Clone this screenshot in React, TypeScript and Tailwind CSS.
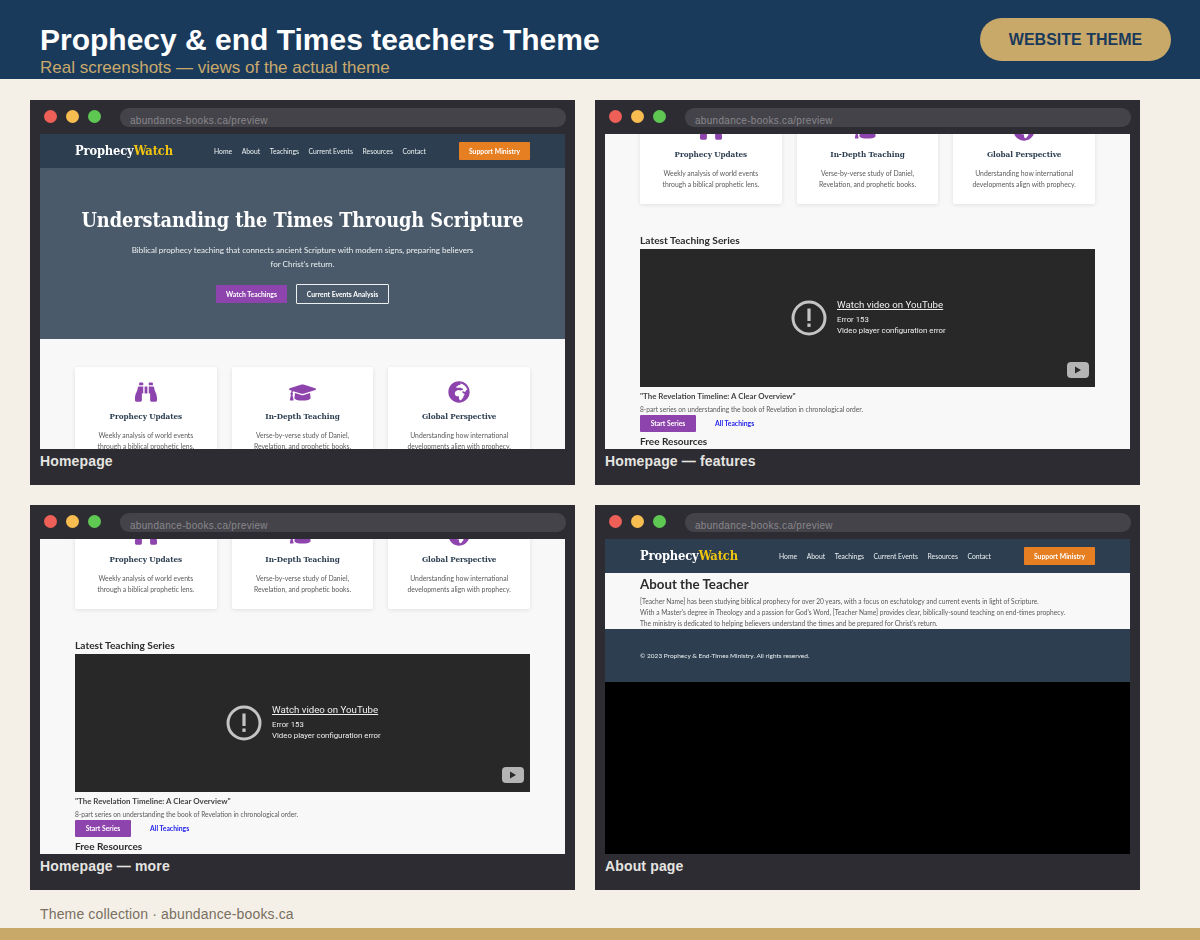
import { FaBinoculars, FaGlobeAfrica, FaGraduationCap } from "react-icons/fa"

const slab = "font-['DejaVu_Serif_Condensed','Liberation_Serif',serif]"
const body = "font-['Lato',sans-serif]"

const features = [
  {
    icon: FaBinoculars,
    size: "h-[22px] w-[22px]",
    title: "Prophecy Updates",
    lines: ["Weekly analysis of world events", "through a biblical prophetic lens."],
  },
  {
    icon: FaGraduationCap,
    size: "h-[27px] w-[27px]",
    title: "In-Depth Teaching",
    lines: ["Verse-by-verse study of Daniel,", "Revelation, and prophetic books."],
  },
  {
    icon: FaGlobeAfrica,
    size: "h-[22px] w-[22px]",
    title: "Global Perspective",
    lines: ["Understanding how international", "developments align with prophecy."],
  },
]

const navLinks = ["Home", "About", "Teachings", "Current Events", "Resources", "Contact"]

function SiteNav() {
  return (
    <div className="flex h-[34px] items-center justify-between bg-[#2c3e50] px-[35px]">
      <div className={`${slab} mt-[1px] w-[139px] text-[12.8px] font-bold leading-none tracking-[-0.15px] text-white`}>
        Prophecy<span className="text-[#f1c40f]">Watch</span>
      </div>
      <div className="flex flex-1 gap-[9.6px] text-[6.8px] text-[#ecf0f1]">
        {navLinks.map((link) => (
          <span key={link}>{link}</span>
        ))}
      </div>
      <div className="flex h-[18px] w-[71px] items-center justify-center rounded-[1px] bg-[#e67e22] text-[6.8px] font-bold text-white">
        Support Ministry
      </div>
    </div>
  )
}

function Hero() {
  return (
    <div className="flex h-[171px] flex-col items-center bg-[#4a5a6a] pt-[38px] text-white">
      <h1 className={`${slab} whitespace-nowrap text-[19.7px] font-bold leading-[30px] tracking-[-0.05px]`}>
        Understanding the Times Through Scripture
      </h1>
      <p className="mt-[8px] text-center text-[8.05px] leading-[13.5px] text-[#ecf0f1]">
        Biblical prophecy teaching that connects ancient Scripture with modern signs, preparing believers
        <br />
        for Christ's return.
      </p>
      <div className="mt-[13px] flex items-center gap-[9px] text-[6.8px] font-bold">
        <div className="flex h-[18px] w-[71px] items-center justify-center rounded-[1px] bg-[#8e44ad]">
          Watch Teachings
        </div>
        <div className="flex h-[20px] w-[93px] items-center justify-center rounded-[1px] border border-[#ecf0f1]">
          Current Events Analysis
        </div>
      </div>
    </div>
  )
}

function Features() {
  return (
    <div className="grid grid-cols-3 gap-[15px]">
      {features.map((feature) => {
        const Icon = feature.icon
        return (
          <div
            key={feature.title}
            className="flex h-[99px] flex-col items-center rounded-[2px] bg-white pt-[14px] shadow-[0_1px_4px_rgba(0,0,0,0.1)]"
          >
            <div className="flex h-[22px] items-center">
              <Icon className={`${feature.size} text-[#8e44ad]`} />
            </div>
            <div className={`${slab} mt-[7px] text-[8.1px] font-bold leading-[12px] tracking-[-0.08px] text-[#2c3e50]`}>
              {feature.title}
            </div>
            <div className="mt-[8px] text-center text-[6.8px] leading-[11px] text-[#5a5a5a]">
              {feature.lines.map((line) => (
                <div key={line}>{line}</div>
              ))}
            </div>
          </div>
        )
      })}
    </div>
  )
}

function VideoError() {
  return (
    <div className="relative flex h-[138px] items-center justify-center bg-[#282828] pl-[3px] text-[#eeeeee]">
      <svg width="36" height="36" viewBox="0 0 36 36" className="mr-[10px]">
        <circle cx="18" cy="18" r="16" fill="none" stroke="#c4c4c4" strokeWidth="3" />
        <rect x="16.4" y="8.5" width="3.2" height="12.5" fill="#c4c4c4" />
        <rect x="16.4" y="23.5" width="3.2" height="3.4" fill="#c4c4c4" />
      </svg>
      <div className="mt-[-3px] w-[110px] whitespace-nowrap font-['Roboto',sans-serif]">
        <div className="text-[9.7px] leading-[13px] underline">Watch video on YouTube</div>
        <div className="mt-[3px] text-[7.8px] leading-[11px]">Error 153</div>
        <div className="text-[7.8px] leading-[11px]">Video player configuration error</div>
      </div>
      <div className="absolute bottom-[9px] right-[6px] flex h-[16px] w-[22px] items-center justify-center rounded-[4px] bg-[#b4b4b4]">
        <svg width="8" height="8" viewBox="0 0 8 8">
          <path d="M1 0.5 L7 4 L1 7.5 Z" fill="#2a2a2a" />
        </svg>
      </div>
    </div>
  )
}

function HomePage({ scroll }: { scroll: boolean }) {
  return (
    <div className={`${body} ${scroll ? "mt-[-262px]" : ""} blur-[0.25px]`}>
      <SiteNav />
      <Hero />
      <div className="bg-[#f8f8f8] px-[35px] pb-[20px] pt-[28px]">
        <Features />
        <h2 className="mt-[30px] text-[10.2px] font-bold leading-[13px] text-[#2c2c2c]">
          Latest Teaching Series
        </h2>
        <div className="mt-[2px]">
          <VideoError />
        </div>
        <div className="mt-[4px] text-[7.9px] font-bold leading-[10px] text-[#444444]">
          "The Revelation Timeline: A Clear Overview"
        </div>
        <div className="mt-[4px] text-[6.65px] leading-[9px] text-[#5a5a5a]">
          8-part series on understanding the book of Revelation in chronological order.
        </div>
        <div className="mt-[1px] flex items-center gap-[19px] text-[6.8px] font-bold">
          <div className="flex h-[17px] w-[56px] items-center justify-center rounded-[1px] bg-[#8e44ad] text-white">
            Start Series
          </div>
          <div className="text-[#2222ee]">All Teachings</div>
        </div>
        <div className="mt-[3px] text-[10px] font-bold leading-[13px] text-[#2c2c2c]">Free Resources</div>
      </div>
    </div>
  )
}

function AboutPage() {
  return (
    <div className={`${body} blur-[0.25px]`}>
      <SiteNav />
      <div className="h-[56px] bg-[#f8f8f8] px-[35px] pt-[3px]">
        <h2 className="text-[13.3px] font-bold leading-[17px] text-[#2c2c2c]">About the Teacher</h2>
        <div className="mt-[3px] text-[6.63px] leading-[11px] text-[#5a5a5a]">
          <div>[Teacher Name] has been studying biblical prophecy for over 20 years, with a focus on eschatology and current events in light of Scripture.</div>
          <div>With a Master's degree in Theology and a passion for God's Word, [Teacher Name] provides clear, biblically-sound teaching on end-times prophecy.</div>
          <div>The ministry is dedicated to helping believers understand the times and be prepared for Christ's return.</div>
        </div>
      </div>
      <div className="flex h-[53px] items-center bg-[#2c3e50] px-[35px] text-[6.5px] text-[#ecf0f1]">
        © 2023 Prophecy &amp; End-Times Ministry. All rights reserved.
      </div>
    </div>
  )
}

function BrowserCard({ caption, children }: { caption: string; children: React.ReactNode }) {
  return (
    <div className="h-[385px] w-[545px] bg-[#2c2c32]">
      <div className="flex h-[34px] items-start pl-[14px] pr-[9px] pt-[8px]">
        <div className="mt-[2px] h-[13px] w-[13px] rounded-full bg-[#ed5f57]" />
        <div className="ml-[9px] mt-[2px] h-[13px] w-[13px] rounded-full bg-[#f7bd50]" />
        <div className="ml-[9px] mt-[2px] h-[13px] w-[13px] rounded-full bg-[#5fc853]" />
        <div className="ml-[19px] h-[19px] flex-1 rounded-[9px] bg-[#444349] pl-[10px] pt-[6px] font-['Liberation_Sans',sans-serif] text-[10px] leading-[13px] tracking-[0.3px] text-[#88878c]">
          abundance-books.ca/preview
        </div>
      </div>
      <div className="mx-[10px] h-[315px] overflow-hidden bg-black">{children}</div>
      <div className="px-[10px] pt-[4px] font-['Liberation_Sans',sans-serif] text-[14px] font-bold leading-[16px] tracking-[0.15px] text-[#e6e4e1]">
        {caption}
      </div>
    </div>
  )
}

export default function App() {
  return (
    <div className="flex h-[940px] flex-col bg-[#f4f0e8] font-['Liberation_Sans',sans-serif]">
      <header className="flex h-[79px] items-start justify-between bg-[#1a3a5c] pl-[40px] pr-[29px]">
        <div className="pt-[22px]">
          <h1 className="text-[30px] font-bold leading-[36px] text-white">
            Prophecy &amp; end Times teachers Theme
          </h1>
          <p className="mt-[1px] text-[17px] leading-[18px] text-[#c9a96a]">
            Real screenshots — views of the actual theme
          </p>
        </div>
        <div className="mt-[18px] flex h-[43px] w-[191px] items-center justify-center rounded-full bg-[#c9a96a] text-[16px] font-bold text-[#1a3a5c]">
          WEBSITE THEME
        </div>
      </header>
      <main className="grid grid-cols-[545px_545px] gap-[20px] pl-[30px] pt-[21px]">
        <BrowserCard caption="Homepage">
          <HomePage scroll={false} />
        </BrowserCard>
        <BrowserCard caption="Homepage — features">
          <HomePage scroll={true} />
        </BrowserCard>
        <BrowserCard caption="Homepage — more">
          <HomePage scroll={true} />
        </BrowserCard>
        <BrowserCard caption="About page">
          <AboutPage />
        </BrowserCard>
      </main>
      <footer className="pl-[40px] pt-[16px] text-[14px] leading-[16px] tracking-[0.15px] text-[#7a6f60]">
        Theme collection · abundance-books.ca
      </footer>
      <div className="mt-auto h-[12px] bg-[#c9a96a]" />
    </div>
  )
}
